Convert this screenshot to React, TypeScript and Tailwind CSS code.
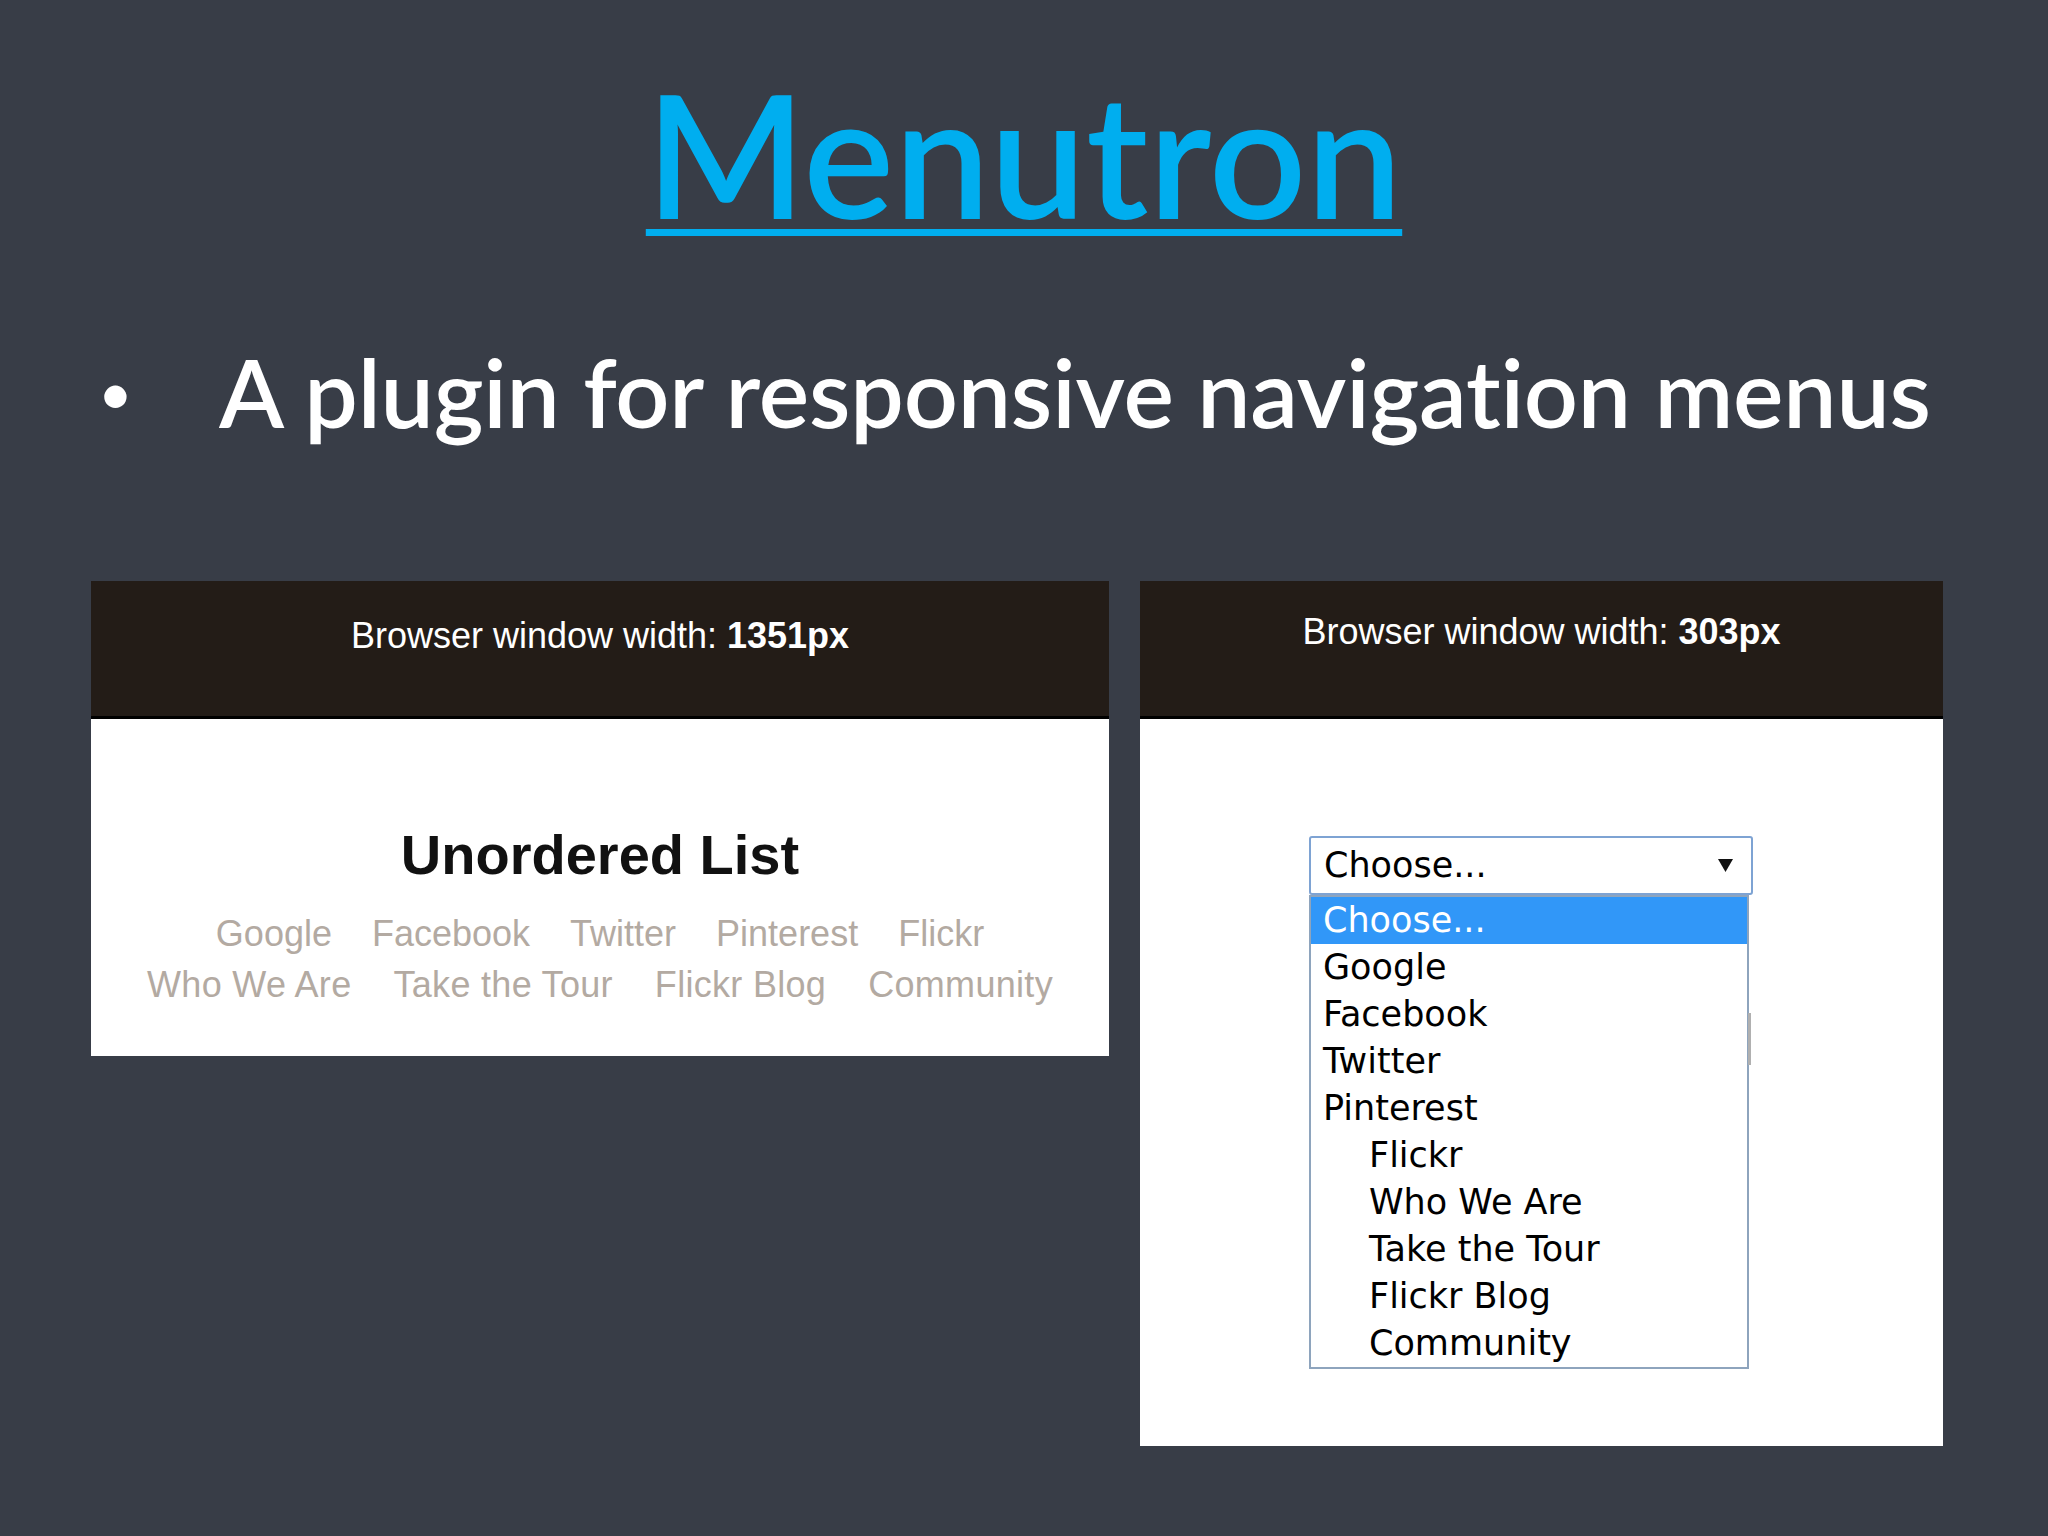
const TOP_LINKS = ["Google", "Facebook", "Twitter", "Pinterest", "Flickr"];
const BOTTOM_LINKS = ["Who We Are", "Take the Tour", "Flickr Blog", "Community"];

const OPTIONS = [
  { label: "Choose...", sub: false, active: true },
  { label: "Google", sub: false },
  { label: "Facebook", sub: false },
  { label: "Twitter", sub: false },
  { label: "Pinterest", sub: false },
  { label: "Flickr", sub: true },
  { label: "Who We Are", sub: true },
  { label: "Take the Tour", sub: true },
  { label: "Flickr Blog", sub: true },
  { label: "Community", sub: true },
];

function BrowserHeader({ width, pt }: { width: string; pt: string }) {
  return (
    <div className={`h-[138px] bg-[#231c17] border-b-[3px] border-black text-center text-white text-[36px] leading-none font-['Liberation_Sans',Arial,sans-serif] ${pt}`}>
      Browser window width: <span className="font-bold">{width}</span>
    </div>
  );
}

export default function App() {
  return (
    <div className="w-[2048px] h-[1536px] bg-[#383d47] overflow-hidden font-['Lato',sans-serif]">
      <div className="pt-[67px] text-center">
        <span className="text-[171px] leading-none font-semibold text-[#00aeef] underline decoration-[7px] underline-offset-[10px]">
          Menutron
        </span>
      </div>

      <div className="mt-[106px] flex text-white">
        <span className="w-[219px] pl-[98px] self-center text-[60px] leading-none">•</span>
        <span className="text-[95px] leading-none font-semibold tracking-[-0.2px]">A plugin for responsive navigation menus</span>
      </div>

      <div className="mt-[142px] ml-[91px] flex items-start gap-[31px]">
        {/* wide window */}
        <div className="w-[1018px]">
          <BrowserHeader width="1351px" pt="pt-[37px]" />
          <div className="bg-white pt-[108px] pb-[46px] text-center font-['Liberation_Sans',Arial,sans-serif]">
            <div className="text-[56px] leading-none font-bold text-[#111]">Unordered List</div>
            <div className="mt-[25px] flex justify-center gap-x-[40px] text-[36px] leading-[51px] text-[#b3aaa2]">
              {TOP_LINKS.map((l) => (
                <span key={l}>{l}</span>
              ))}
            </div>
            <div className="flex justify-center gap-x-[42px] text-[36px] leading-[51px] tracking-[0.3px] text-[#b3aaa2]">
              {BOTTOM_LINKS.map((l) => (
                <span key={l}>{l}</span>
              ))}
            </div>
          </div>
        </div>

        {/* narrow window */}
        <div className="w-[803px]">
          <BrowserHeader width="303px" pt="pt-[33px]" />
          <div className="bg-white pt-[117px] pb-[77px] pl-[169px] font-['DejaVu_Sans',Verdana,sans-serif] text-[35px] text-black">
            <div className="w-[444px] h-[59px] border-2 border-[#7ea3d3] rounded-[3px] flex items-center justify-between pl-[13px] pr-[17px] leading-none">
              <span>Choose...</span>
              <svg width="17" height="15" viewBox="0 0 17 15">
                <path d="M1 1h15L8.5 14z" fill="#111" />
              </svg>
            </div>
            <div className="relative w-[440px] border-2 border-[#8ea4bd]">
              {OPTIONS.map((o) => (
                <div
                  key={o.label}
                  className={`h-[47px] flex items-center leading-none ${o.sub ? "pl-[58px]" : "pl-[12px]"} ${o.active ? "bg-[#3197f8] text-white" : ""}`}
                >
                  {o.label}
                </div>
              ))}
              <div className="absolute right-[-4px] top-[116px] w-[3px] h-[52px] bg-[#b0b0b0]" />
            </div>
          </div>
        </div>
      </div>
    </div>
  );
}
